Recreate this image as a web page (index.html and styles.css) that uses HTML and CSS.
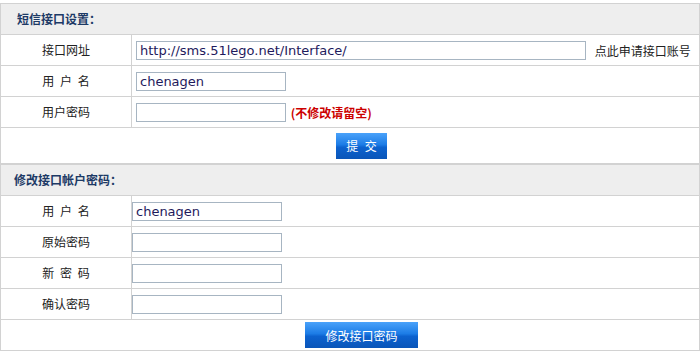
FILE: index.html
```html
<!DOCTYPE html>
<html>
<head>
<meta charset="utf-8">
<title>短信接口设置</title>
<link rel="stylesheet" href="styles.css">
</head>
<body>
<table class="form-table first">
  <tr>
    <td colspan="2" class="section-title">短信接口设置：</td>
  </tr>
  <tr>
    <td class="label">接口网址</td>
    <td class="field">
      <input type="text" class="input url" value="http://sms.51lego.net/Interface/">
      <a class="apply-link">点此申请接口账号</a>
    </td>
  </tr>
  <tr>
    <td class="label spaced">用 户 名</td>
    <td class="field"><input type="text" class="input" value="chenagen"></td>
  </tr>
  <tr>
    <td class="label">用户密码</td>
    <td class="field">
      <input type="password" class="input">
      <span class="hint">(不修改请留空)</span>
    </td>
  </tr>
  <tr>
    <td colspan="2" class="actions tall"><button class="btn">提 交</button></td>
  </tr>
</table>

<table class="form-table second">
  <tr>
    <td colspan="2" class="section-title">修改接口帐户密码：</td>
  </tr>
  <tr>
    <td class="label spaced">用 户 名</td>
    <td class="field flush"><input type="text" class="input" value="chenagen"></td>
  </tr>
  <tr>
    <td class="label">原始密码</td>
    <td class="field flush"><input type="password" class="input"></td>
  </tr>
  <tr>
    <td class="label spaced">新 密 码</td>
    <td class="field flush"><input type="password" class="input"></td>
  </tr>
  <tr>
    <td class="label">确认密码</td>
    <td class="field flush"><input type="password" class="input"></td>
  </tr>
  <tr>
    <td colspan="2" class="actions"><button class="btn wide">修改接口密码</button></td>
  </tr>
</table>
</body>
</html>
```

FILE: styles.css
```css
body {
  margin: 0;
  padding-top: 3px;
  font-family: "Noto Sans CJK SC", "DejaVu Sans", sans-serif;
  font-size: 12px;
  color: #222;
  background-color: #fff;
}

.form-table {
  width: 700px;
  border-collapse: collapse;
  border: 1px solid #d2d2d2;
}

.form-table td {
  border: 1px solid #d2d2d2;
  height: 30px;
  padding: 0 4px;
  line-height: 18px;
  vertical-align: middle;
}

.section-title {
  background-color: #eeeeee;
  font-weight: bold;
  color: #1d3a66;
}

.first .section-title {
  padding-left: 16px !important;
}

.second .section-title {
  padding-left: 13px !important;
}

.label {
  width: 122px;
  text-align: center;
  color: #222;
}

.spaced {
  word-spacing: 3px;
}

.field.flush {
  padding-left: 0;
}

.input {
  box-sizing: border-box;
  width: 150px;
  height: 19px;
  margin: 0;
  padding: 0 3px;
  border: 1px solid #a7b5c2;
  font-family: "DejaVu Sans", sans-serif;
  font-size: 13px;
  color: #1e1a5c;
  vertical-align: middle;
}

.input.url {
  width: 450px;
}

.apply-link {
  margin-left: 6px;
  color: #222;
  vertical-align: middle;
}

.hint {
  margin-left: 2px;
  color: #cc0000;
  font-weight: bold;
  vertical-align: middle;
}

.actions {
  text-align: center;
  padding-left: 27px !important;
}

.actions.tall {
  height: 35px !important;
}

.btn {
  height: 26px;
  width: 51px;
  border: none;
  padding: 0;
  font-family: "Noto Sans CJK SC", sans-serif;
  font-size: 12px;
  word-spacing: 4px;
  color: #fff;
  background: linear-gradient(#4aa2fa, #1c7ce6 45%, #0c62cf 55%, #0a55b8);
  vertical-align: middle;
}

.btn.wide {
  width: 113px;
}
```
